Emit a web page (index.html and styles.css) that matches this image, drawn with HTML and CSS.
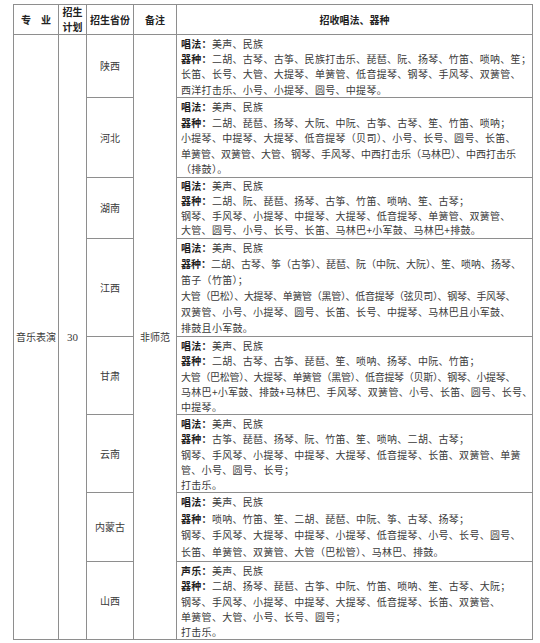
FILE: index.html
```html
<!DOCTYPE html>
<html lang="zh-CN">
<head>
<meta charset="utf-8">
<title>招收唱法、器种</title>
<link rel="stylesheet" href="styles.css">
</head>
<body>
<table class="plan">
  <colgroup>
    <col class="c-major">
    <col class="c-num">
    <col class="c-prov">
    <col class="c-note">
    <col class="c-items">
  </colgroup>
  <thead>
    <tr class="head">
      <th>专　业</th>
      <th class="two"><span class="hl">招生</span><span class="hl">计划</span></th>
      <th>招生省份</th>
      <th>备注</th>
      <th>招收唱法、器种</th>
    </tr>
  </thead>
  <tbody>
    <tr class="r-sx">
      <td class="span" rowspan="8">音乐表演</td>
      <td class="span num" rowspan="8">30</td>
      <td class="prov">陕西</td>
      <td class="span" rowspan="8">非师范</td>
      <td class="items">
        <div class="ln"><b>唱法：</b>美声、民族</div>
        <div class="ln"><b>器种：</b>二胡、古琴、古筝、民族打击乐、琵琶、阮、扬琴、竹笛、唢呐、笙；</div>
        <div class="ln">长笛、长号、大管、大提琴、单簧管、低音提琴、钢琴、手风琴、双簧管、</div>
        <div class="ln">西洋打击乐、小号、小提琴、圆号、中提琴。</div>
      </td>
    </tr>
    <tr class="r-hb">
      <td class="prov">河北</td>
      <td class="items">
        <div class="ln"><b>唱法：</b>美声、民族</div>
        <div class="ln"><b>器种：</b>二胡、琵琶、扬琴、大阮、中阮、古筝、古琴、笙、竹笛、唢呐；</div>
        <div class="ln">小提琴、中提琴、大提琴、低音提琴（贝司）、小号、长号、圆号、长笛、</div>
        <div class="ln tight">单簧管、双簧管、大管、钢琴、手风琴、中西打击乐（马林巴）、中西打击乐</div>
        <div class="ln">（排鼓）。</div>
      </td>
    </tr>
    <tr class="r-hn">
      <td class="prov">湖南</td>
      <td class="items">
        <div class="ln"><b>唱法：</b>美声、民族</div>
        <div class="ln"><b>器种：</b>二胡、阮、琵琶、扬琴、古筝、竹笛、唢呐、笙、古琴；</div>
        <div class="ln">钢琴、手风琴、小提琴、中提琴、大提琴、低音提琴、单簧管、双簧管、</div>
        <div class="ln">大管、圆号、小号、长号、长笛、马林巴+小军鼓、马林巴+排鼓。</div>
      </td>
    </tr>
    <tr class="r-jx">
      <td class="prov">江西</td>
      <td class="items">
        <div class="ln"><b>唱法：</b>美声、民族</div>
        <div class="ln tight"><b>器种：</b>二胡、古琴、筝（古筝）、琵琶、阮（中阮、大阮）、笙、唢呐、扬琴、</div>
        <div class="ln">笛子（竹笛）；</div>
        <div class="ln tighter">大管（巴松）、大提琴、单簧管（黑管）、低音提琴（弦贝司）、钢琴、手风琴、</div>
        <div class="ln">双簧管、小号、小提琴、圆号、长笛、长号、中提琴、马林巴且小军鼓、</div>
        <div class="ln">排鼓且小军鼓。</div>
      </td>
    </tr>
    <tr class="r-gs">
      <td class="prov">甘肃</td>
      <td class="items">
        <div class="ln"><b>唱法：</b>美声、民族</div>
        <div class="ln"><b>器种：</b>二胡、古琴、古筝、琵琶、笙、唢呐、扬琴、中阮、竹笛；</div>
        <div class="ln tighter">大管（巴松管）、大提琴、单簧管（黑管）、低音提琴（贝斯）、钢琴、小提琴、</div>
        <div class="ln">马林巴+小军鼓、排鼓+马林巴、手风琴、双簧管、小号、长笛、圆号、长号、</div>
        <div class="ln">中提琴。</div>
      </td>
    </tr>
    <tr class="r-yn">
      <td class="prov">云南</td>
      <td class="items">
        <div class="ln"><b>唱法：</b>美声、民族</div>
        <div class="ln"><b>器种：</b>古筝、琵琶、扬琴、阮、竹笛、笙、唢呐、二胡、古琴；</div>
        <div class="ln">钢琴、手风琴、小提琴、中提琴、大提琴、低音提琴、长笛、双簧管、单簧</div>
        <div class="ln">管、小号、圆号、长号；</div>
        <div class="ln">打击乐。</div>
      </td>
    </tr>
    <tr class="r-nm">
      <td class="prov">内蒙古</td>
      <td class="items">
        <div class="ln"><b>唱法：</b>美声、民族</div>
        <div class="ln"><b>器种：</b>唢呐、竹笛、笙、二胡、琵琶、中阮、筝、古琴、扬琴；</div>
        <div class="ln">钢琴、手风琴、大提琴、中提琴、小提琴、低音提琴、小号、长号、圆号、</div>
        <div class="ln">长笛、单簧管、双簧管、大管（巴松管）、马林巴、排鼓。</div>
      </td>
    </tr>
    <tr class="r-shx">
      <td class="prov">山西</td>
      <td class="items">
        <div class="ln"><b>声乐：</b>美声、民族</div>
        <div class="ln"><b>器种：</b>二胡、扬琴、琵琶、古筝、中阮、竹笛、唢呐、笙、古琴、大阮；</div>
        <div class="ln">钢琴、手风琴、小提琴、中提琴、大提琴、低音提琴、长笛、双簧管、</div>
        <div class="ln">单簧管、大管、小号、长号、圆号；</div>
        <div class="ln">打击乐。</div>
      </td>
    </tr>
  </tbody>
</table>
</body>
</html>
```

FILE: styles.css
```css
html, body {
  margin: 0;
  padding: 0;
  background: #ffffff;
}

body {
  padding: 4px 0 0 13px;
  font-family: "Noto Sans CJK SC", sans-serif;
  font-size: 10px;
  color: #3a3a3a;
}

.plan {
  border-collapse: collapse;
  table-layout: fixed;
  width: 519px;
}

.c-major { width: 45px; }
.c-num { width: 28px; }
.c-prov { width: 47px; }
.c-note { width: 43px; }
.c-items { width: 356px; }

.plan th,
.plan td {
  border: 1px solid #8e8e8e;
  padding: 0;
}

.head {
  height: 30px;
}

.head th {
  font-weight: 700;
  color: #222;
  text-align: center;
  vertical-align: middle;
  font-size: 10px;
  line-height: 14px;
}

.hl {
  display: block;
  line-height: 14.5px;
}

.span,
.prov {
  text-align: center;
  vertical-align: middle;
  color: #3a3a3a;
  line-height: 14px;
}

.num {
  font-family: "Liberation Serif", serif;
  font-size: 11px;
}

.items {
  vertical-align: top;
  text-align: left;
  padding: 1px 2px 0 4px !important;
}

.ln {
  white-space: nowrap;
  letter-spacing: 0.3px;
}

.ln b {
  font-weight: 700;
  color: #1e1e1e;
}

.ln.tight {
  letter-spacing: 0;
}

.ln.tighter {
  letter-spacing: -0.3px;
}

.r-sx { height: 63px; }
.r-sx .items { line-height: 15.2px; }

.r-hb { height: 80px; }
.r-hb .items { line-height: 15.6px; }

.r-hn { height: 61px; }
.r-hn .items { line-height: 14.8px; }

.r-jx { height: 98px; }
.r-jx .items { line-height: 16px; }

.r-gs { height: 78px; }
.r-gs .items { line-height: 15.2px; }

.r-yn { height: 78px; }
.r-yn .items { line-height: 15.2px; }

.r-nm { height: 69px; }
.r-nm .items { line-height: 16.6px; }

.r-shx { height: 78px; }
.r-shx .items { line-height: 15.2px; }
```
